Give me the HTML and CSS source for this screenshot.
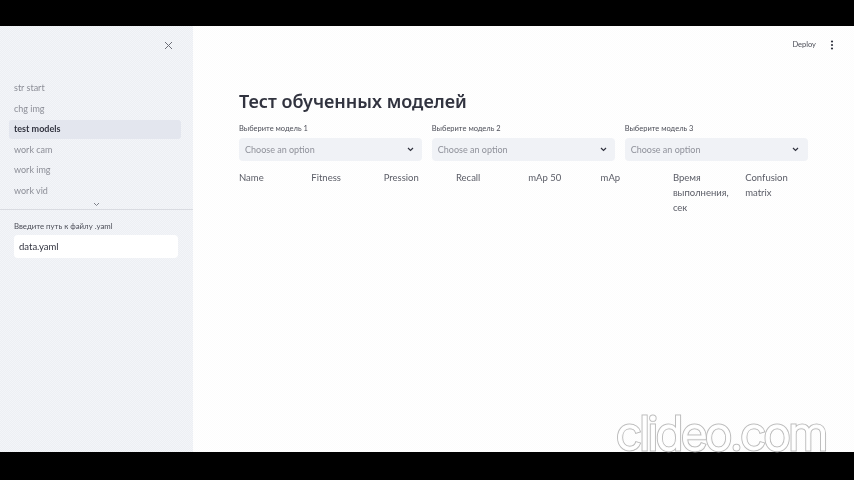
FILE: index.html
```html
<!DOCTYPE html>
<html lang="ru">
<head>
<meta charset="utf-8">
<title>Тест обученных моделей</title>
<link rel="stylesheet" href="styles.css">
</head>
<body>
<div class="app">
  <aside class="sidebar">
    <div class="side-top">
      <svg class="close" width="9" height="9" viewBox="0 0 9 9"><path d="M1 1l7 7M8 1l-7 7"/></svg>
    </div>
    <nav class="nav">
      <a class="nav-item">str start</a>
      <a class="nav-item">chg img</a>
      <a class="nav-item active">test models</a>
      <a class="nav-item">work cam</a>
      <a class="nav-item">work img</a>
      <a class="nav-item">work vid</a>
    </nav>
    <div class="nav-more">
      <svg width="7" height="5" viewBox="0 0 7 5"><path d="M1 1l2.500 2.500L6 1"/></svg>
    </div>
    <div class="side-form">
      <label class="side-label">Введите путь к файлу .yaml</label>
      <div class="side-input">data.yaml</div>
    </div>
  </aside>
  <main class="main">
    <header class="topbar">
      <span class="deploy">Deploy</span>
      <svg class="dots" width="4" height="10" viewBox="0 0 4 10"><circle cx="2" cy="1.500" r="1.100"/><circle cx="2" cy="5" r="1.100"/><circle cx="2" cy="8.500" r="1.100"/></svg>
    </header>
    <section class="content">
      <h1 class="title">Тест обученных моделей</h1>
      <div class="selects">
        <div class="field">
          <label class="field-label">Выберите модель 1</label>
          <div class="select"><span>Choose an option</span><svg width="7" height="5" viewBox="0 0 7 5"><path d="M1 1l2.500 2.500L6 1"/></svg></div>
        </div>
        <div class="field">
          <label class="field-label">Выберите модель 2</label>
          <div class="select"><span>Choose an option</span><svg width="7" height="5" viewBox="0 0 7 5"><path d="M1 1l2.500 2.500L6 1"/></svg></div>
        </div>
        <div class="field">
          <label class="field-label">Выберите модель 3</label>
          <div class="select"><span>Choose an option</span><svg width="7" height="5" viewBox="0 0 7 5"><path d="M1 1l2.500 2.500L6 1"/></svg></div>
        </div>
      </div>
      <div class="columns">
        <div>Name</div>
        <div>Fitness</div>
        <div>Pression</div>
        <div>Recall</div>
        <div>mAp 50</div>
        <div>mAp</div>
        <div>Время выполнения, сек</div>
        <div>Confusion matrix</div>
      </div>
    </section>
  </main>
</div>
<div class="watermark" data-text="clideo.com">clideo.com</div>
</body>
</html>
```

FILE: styles.css
```css
* { box-sizing: border-box; }
html, body { margin: 0; height: 100%; }
body {
  position: relative;
  width: 854px;
  height: 480px;
  overflow: hidden;
  background: #000;
  padding: 26px 0 28px;
  font-family: "Lato", "Noto Sans", sans-serif;
  color: #31333f;
}
.app {
  display: flex;
  height: 426px;
  background: repeating-conic-gradient(#fff 0 25%, #fcfcfc 0 50%) 0 0 / 2px 2px;
  opacity: 0.999;
}

.sidebar {
  width: 193px;
  flex: none;
  background: repeating-conic-gradient(#edeff3 0 25%, #f3f5f9 0 50%) 0 0 / 2px 2px;
  display: flex;
  flex-direction: column;
}
.side-top {
  height: 50px;
  padding: 15px 20px 0 0;
  display: flex;
  justify-content: flex-end;
  align-items: flex-start;
}
.close path { stroke: #6b6d76; stroke-width: 1; fill: none; }
.nav { display: flex; flex-direction: column; gap: 2px; padding: 3px 12px 0 9px; }
.nav-item {
  height: 18.500px;
  line-height: 18.500px;
  padding-left: 5px;
  border-radius: 3px;
  font-size: 9px;
  color: #8c8e97;
}
.nav-item.active { background: #e3e6ee; color: #31333f; font-weight: 700; }
.nav-more {
  height: 10px;
  border-bottom: 1px solid #d9dbe1;
  display: flex;
  justify-content: center;
  align-items: center;
}
.nav-more path { stroke: #7d7f88; stroke-width: 1; fill: none; }
.side-form { padding: 10px 14px 0; }
.side-label { display: block; font-size: 7.800px; line-height: 12px; color: #4b4d57; margin-bottom: 3px; }
.side-input {
  height: 23px;
  line-height: 23px;
  padding-left: 5px;
  margin-right: 1px;
  background: #fff;
  border-radius: 4px;
  font-size: 9.500px;
  color: #31333f;
}

.main { flex: 1; min-width: 0; display: flex; flex-direction: column; }
.topbar {
  height: 37px;
  display: flex;
  justify-content: flex-end;
  align-items: center;
  padding: 0 20px 0 0;
  gap: 14px;
}
.deploy { font-size: 7.500px; color: #4b4d57; }
.dots { fill: #31333f; }
.content { padding: 23px 46px 0; }
.title {
  margin: 0 0 7px;
  font-family: "Noto Sans", sans-serif;
  font-size: 18px;
  line-height: 30px;
  font-weight: 600;
  color: #31333f;
}
.selects { display: grid; grid-template-columns: repeat(3, 1fr); gap: 9.500px; }
.field-label { display: block; font-size: 7.500px; line-height: 12px; color: #4b4d57; margin-bottom: 3px; }
.select {
  height: 23px;
  background: #f0f2f6;
  border-radius: 4px;
  padding: 0 8.500px 0 6px;
  display: flex;
  justify-content: space-between;
  align-items: center;
  font-size: 9px;
  color: #8f919a;
}
.select path { stroke: #31333f; stroke-width: 1.200; fill: none; }
.columns {
  display: grid;
  grid-template-columns: repeat(8, 1fr);
  column-gap: 9.500px;
  margin-top: 8.500px;
  font-size: 9.500px;
  line-height: 15px;
  color: #5a5c66;
}

.watermark {
  position: absolute;
  right: 28px;
  bottom: 24px;
  font-family: "Inter", sans-serif;
  font-weight: 300;
  font-size: 46px;
  line-height: 46px;
  letter-spacing: -2.500px;
  color: transparent;
  -webkit-text-stroke: 3px #bcbcbc;
  filter: grayscale(1);
}
.watermark::after {
  content: attr(data-text);
  position: absolute;
  left: 0;
  top: 0;
  color: #fff;
  -webkit-text-stroke: 1px #fff;
}
```
